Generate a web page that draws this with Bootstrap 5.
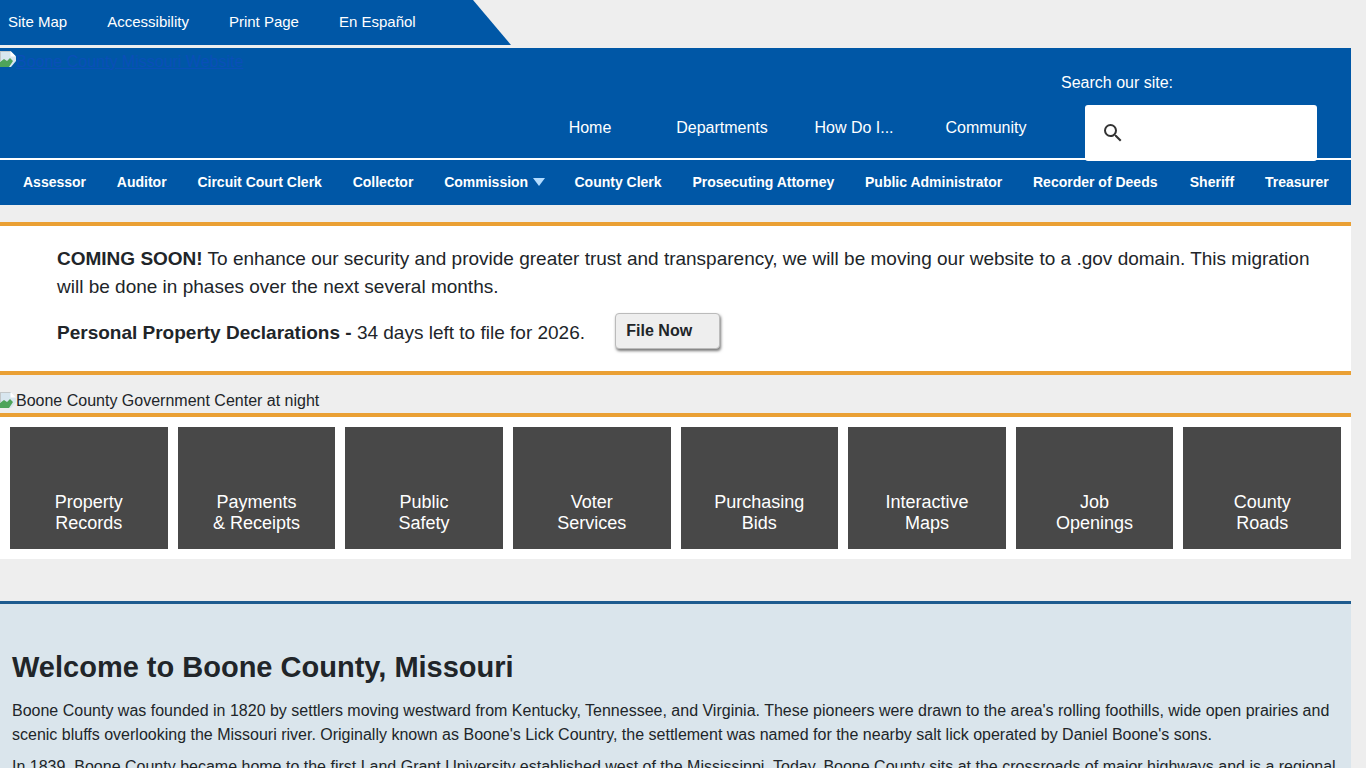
<!DOCTYPE html>
<html lang="en">
<head>
<meta charset="utf-8">
<title>Boone County, Missouri</title>
<link href="https://cdn.jsdelivr.net/npm/bootstrap@5.3.0/dist/css/bootstrap.min.css" rel="stylesheet">
<style>
html,body{background:#eee;}
body{font-family:"Liberation Sans",Arial,sans-serif;color:#212529;font-size:16px;line-height:1.5;}
.bc-page{width:1351px;}
.bc-top{height:45px;width:511px;background:#0057a6;clip-path:polygon(0 0,473px 0,511px 45px,0 45px);}
.bc-top a{color:#fff;text-decoration:none;font-size:15px;line-height:43px;margin-right:40px;}
.bc-top a:first-child{margin-left:8px;}
.bc-head{margin-top:3px;height:110px;background:#0057a6;}
.bc-logo{padding-top:2px;}
.bc-logo a{color:#0a4fb8;font-size:16px;line-height:22px;text-decoration:underline;}
.bc-broken{width:16px;height:16px;flex:none;}
.bc-main{padding-bottom:18px;}
.bc-main a{display:block;width:132px;text-align:center;color:#fff;text-decoration:none;font-size:16px;line-height:24px;}
.bc-right{width:299px;padding:25px 34px 0 33px;position:relative;z-index:2;}
.bc-search-label{color:#fff;font-size:16px;line-height:20px;margin:0 0 12px -24px;}
.bc-search{width:232px;height:56px;background:#fff;border-radius:3px;padding-left:16px;}
.bc-sub{border-top:2px solid #fff;height:47px;background:#0057a6;padding:0 23px;gap:30.8px;}
.bc-sub a{color:#fff;font-weight:700;font-size:14px;text-decoration:none;white-space:nowrap;}
.bc-sub .bc-sheriff{margin-left:1.5px;}
.bc-caret{display:inline-block;border-left:6px solid transparent;border-right:6px solid transparent;border-top:8px solid #b3dcff;margin:0 -1.5px 0 5px;vertical-align:1px;}
.bc-alert{margin-top:17px;background:#fff;border-top:4px solid #eaa034;border-bottom:4px solid #eaa034;padding:19px 35px 0 57px;height:153px;font-size:19px;line-height:28px;}
.bc-alert p{margin:0;}
.bc-alert .bc-second{margin-top:18px;}
.bc-file{width:105px;height:36px;margin-left:25px;background:#eee;border:1px solid #bbb;border-radius:4px;box-shadow:1px 2px 3px #777;font-weight:700;font-size:16px;line-height:34px;padding:0 0 0 10px;color:#212529;text-align:left;vertical-align:top;margin-top:-6px;}
.bc-file:hover{background:#eee;color:#212529;border-color:#bbb;}
.bc-hero{height:38px;font-size:16px;line-height:18px;padding-top:17px;}
.bc-hero svg{vertical-align:top;}
.bc-tiles{background:#fff;border-top:4px solid #eaa034;padding:10px;gap:10px;}
.bc-tile{flex:1 1 0;height:122px;background:#484848;color:#fff;text-decoration:none;text-align:center;font-size:18px;line-height:21px;padding-top:65px;}
.bc-welcome{margin-top:42px;border-top:3px solid #1d5b8f;background:#dae5ec;padding:46px 12px 30px;}
.bc-welcome h1{font-size:29px;font-weight:700;line-height:35px;margin:0 0 14px;color:#212529;}
.bc-welcome p{margin:0 0 8px;line-height:24px;font-size:16px;}
</style>
</head>
<body>
<div class="bc-page">
  <nav class="bc-top d-flex"><a href="#">Site Map</a><a href="#">Accessibility</a><a href="#">Print Page</a><a href="#">En Español</a></nav>
  <header class="bc-head d-flex">
    <div class="bc-logo flex-grow-1">
      <a href="#" class="d-inline-flex"><svg class="bc-broken" viewBox="0 0 16 16"><path d="M0 0h10.5L16 5.5V10l-5 6H0z" fill="#d8e6ef"/><path d="M10.5 0L16 5.5h-5.5z" fill="#fff"/><path d="M0 16v-5l4-3 3 2 3-3 3 3-4 6z" fill="#4ea45a"/><path d="M0 0h10.5v1H1v9H0z" fill="#c3c7c9"/></svg><span>Boone County Missouri Website</span></a>
    </div>
    <div class="bc-main d-flex align-items-end"><a href="#">Home</a><a href="#">Departments</a><a href="#">How Do I...</a><a href="#">Community</a></div>
    <div class="bc-right">
      <div class="bc-search-label">Search our site:</div>
      <div class="bc-search d-flex align-items-center"><svg width="24" height="24" viewBox="0 0 24 24" fill="#333"><path d="M15.5 14h-.79l-.28-.27A6.471 6.471 0 0 0 16 9.5 6.5 6.5 0 1 0 9.5 16c1.61 0 3.09-.59 4.23-1.57l.27.28v.79l5 4.99L20.49 19l-4.99-5zm-6 0C7.01 14 5 11.99 5 9.5S7.01 5 9.5 5 14 7.01 14 9.5 11.99 14 9.5 14z"/></svg></div>
    </div>
  </header>
  <nav class="bc-sub d-flex align-items-center"><a href="#">Assessor</a><a href="#">Auditor</a><a href="#">Circuit Court Clerk</a><a href="#">Collector</a><a href="#">Commission<span class="bc-caret"></span></a><a href="#">County Clerk</a><a href="#">Prosecuting Attorney</a><a href="#">Public Administrator</a><a href="#">Recorder of Deeds</a><a href="#" class="bc-sheriff">Sheriff</a><a href="#">Treasurer</a></nav>
  <section class="bc-alert">
    <p><strong>COMING SOON!</strong> To enhance our security and provide greater trust and transparency, we will be moving our website to a .gov domain. This migration will be done in phases over the next several months.</p>
    <p class="bc-second"><strong>Personal Property Declarations -</strong> 34 days left to file for 2026. <a href="#" class="btn bc-file">File Now</a></p>
  </section>
  <div class="bc-hero"><svg width="16" height="16" viewBox="0 0 16 16"><path d="M0 0h10.5L16 5.5V10l-5 6H0z" fill="#d8e6ef"/><path d="M10.5 0L16 5.5h-5.5z" fill="#fff"/><path d="M0 16v-5l4-3 3 2 3-3 3 3-4 6z" fill="#4ea45a"/><path d="M0 0h10.5v1H1v9H0z" fill="#c3c7c9"/></svg>Boone County Government Center at night</div>
  <div class="bc-tiles d-flex">
    <a class="bc-tile" href="#">Property<br>Records</a>
    <a class="bc-tile" href="#">Payments<br>&amp; Receipts</a>
    <a class="bc-tile" href="#">Public<br>Safety</a>
    <a class="bc-tile" href="#">Voter<br>Services</a>
    <a class="bc-tile" href="#">Purchasing<br>Bids</a>
    <a class="bc-tile" href="#">Interactive<br>Maps</a>
    <a class="bc-tile" href="#">Job<br>Openings</a>
    <a class="bc-tile" href="#">County<br>Roads</a>
  </div>
  <section class="bc-welcome">
    <h1>Welcome to Boone County, Missouri</h1>
    <p>Boone County was founded in 1820 by settlers moving westward from Kentucky, Tennessee, and Virginia. These pioneers were drawn to the area's rolling foothills, wide open prairies and scenic bluffs overlooking the Missouri river. Originally known as Boone's Lick Country, the settlement was named for the nearby salt lick operated by Daniel Boone's sons.</p>
    <p>In 1839, Boone County became home to the first Land Grant University established west of the Mississippi. Today, Boone County sits at the crossroads of major highways and is a regional center for education, health care, and commerce.</p>
  </section>
</div>
</body>
</html>
